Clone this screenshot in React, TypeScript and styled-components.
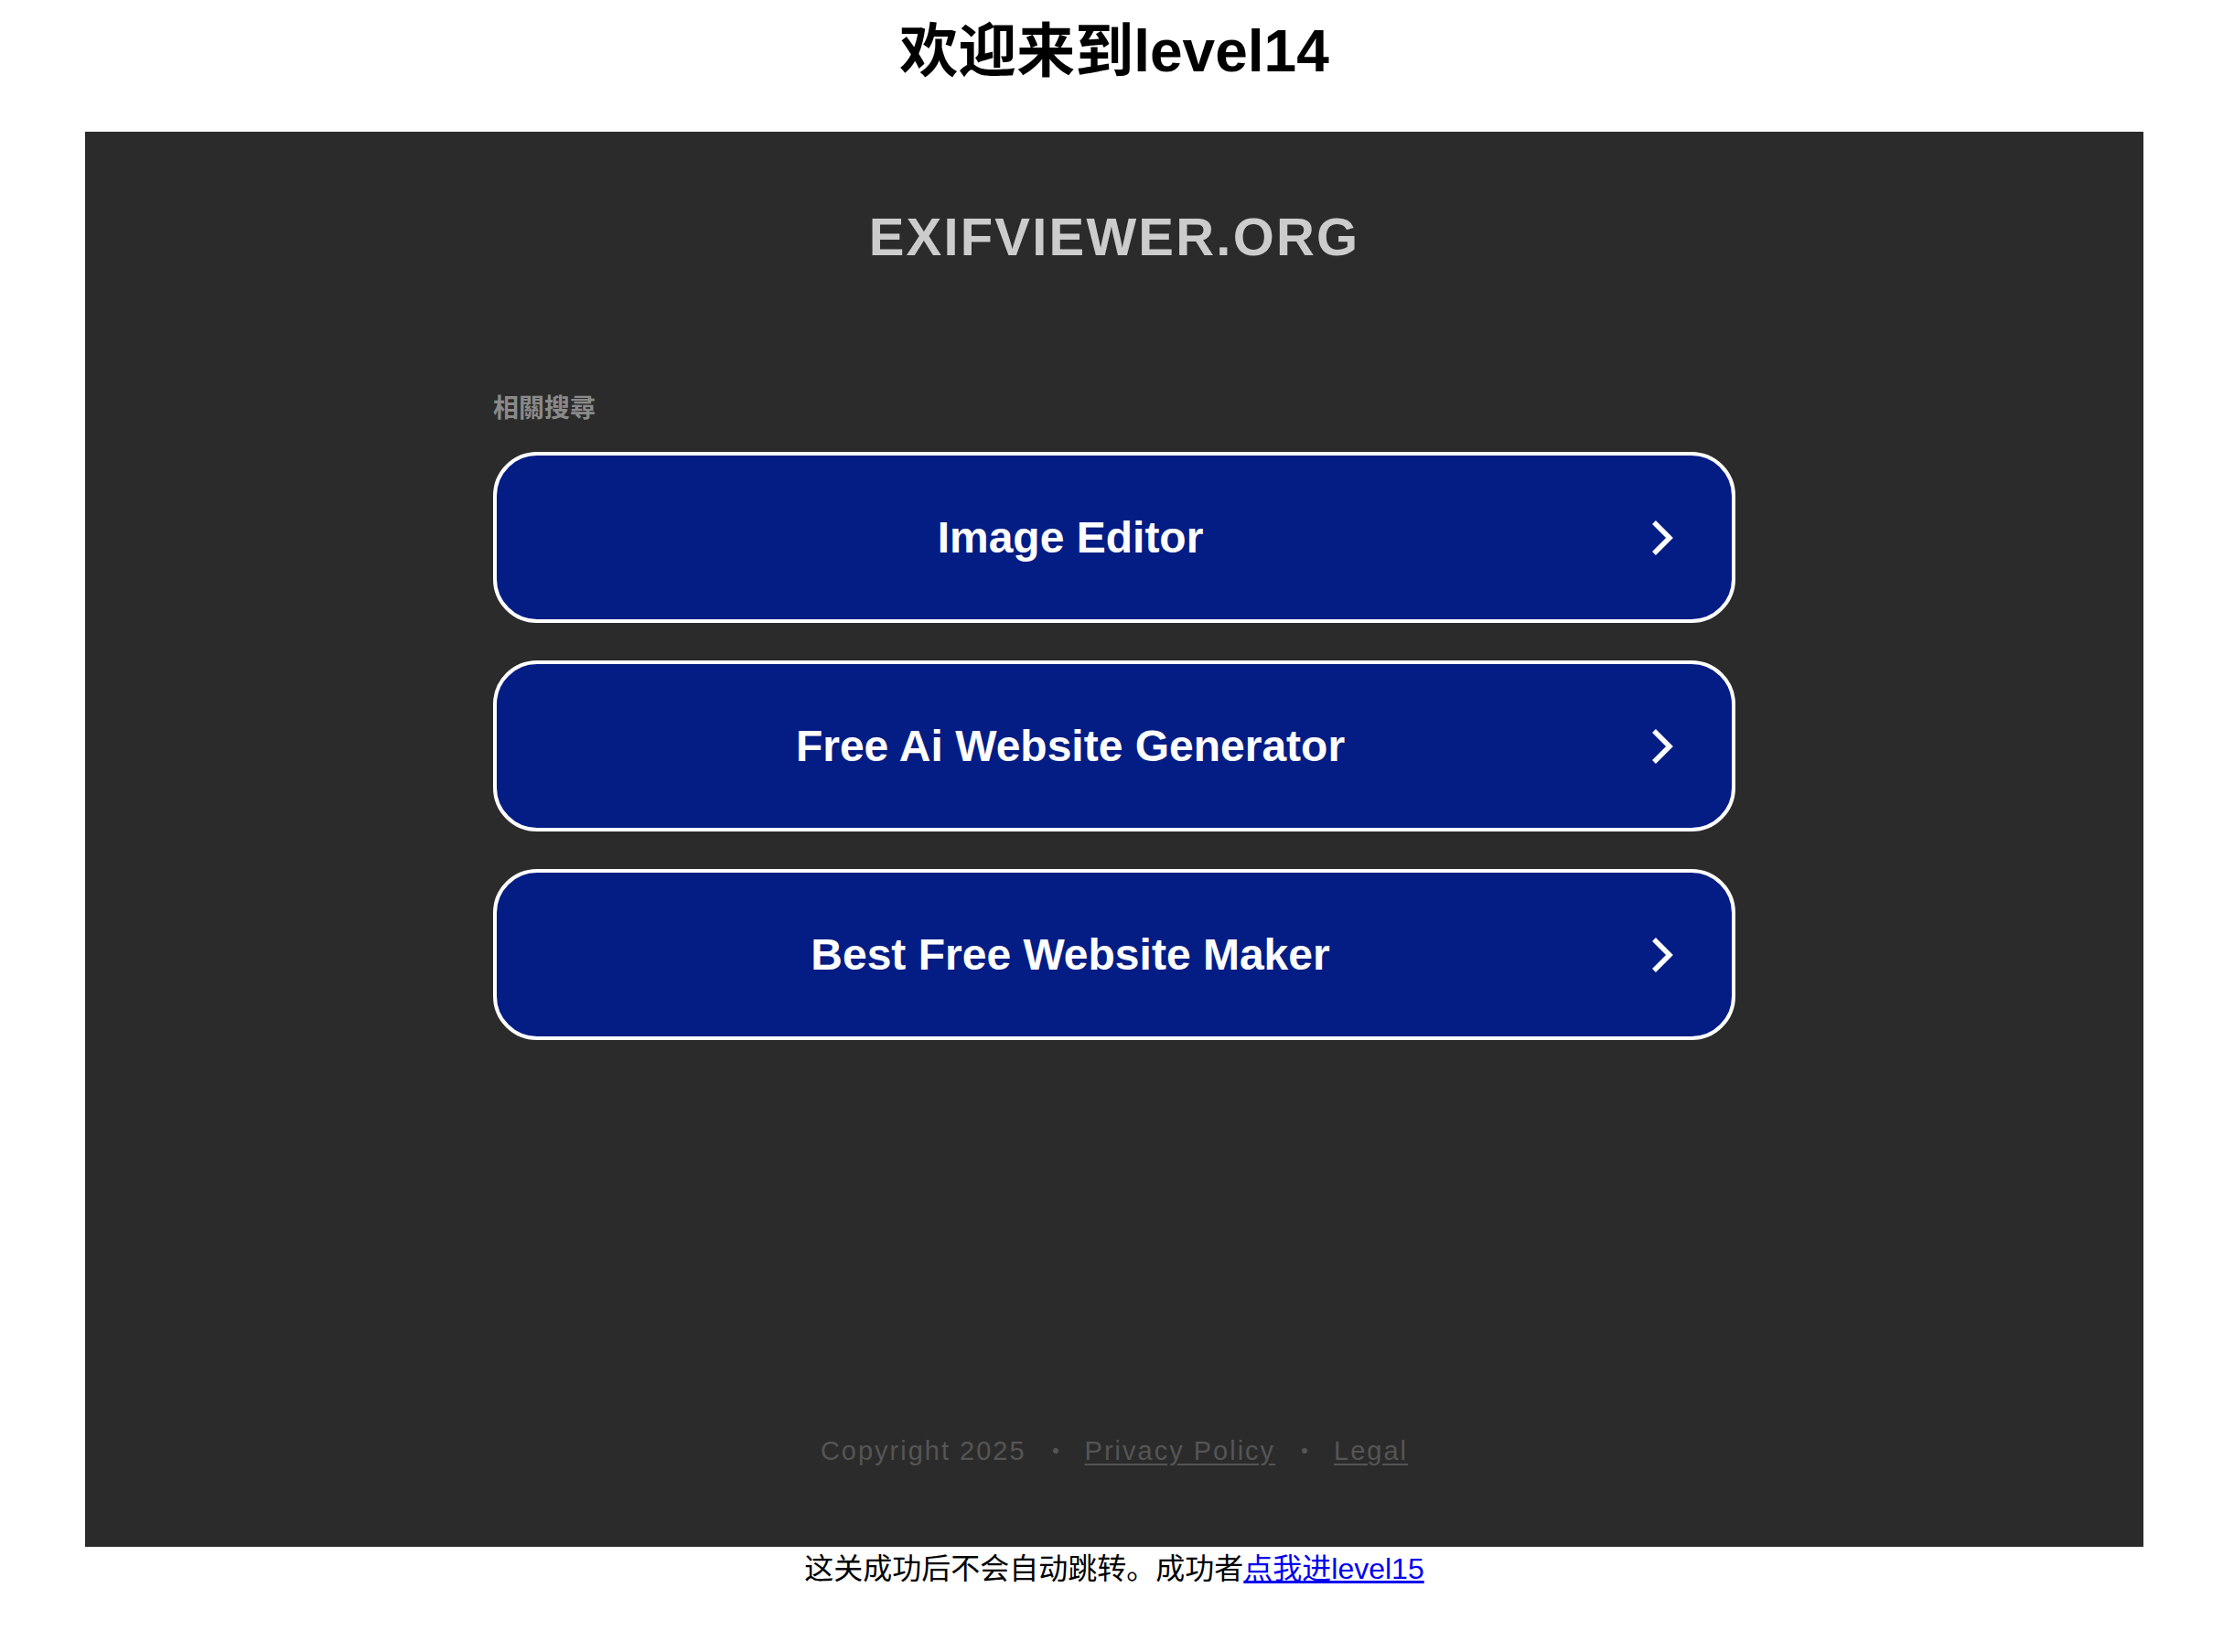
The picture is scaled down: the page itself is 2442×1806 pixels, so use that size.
import styled, { createGlobalStyle } from 'styled-components';

const GlobalStyle = createGlobalStyle`
  html, body {
    margin: 0;
    padding: 0;
    background: #ffffff;
  }
  body {
    font-family: 'Liberation Sans', 'Noto Sans CJK SC', Arial, sans-serif;
    color: #000000;
  }
`;

const links = ['Image Editor', 'Free Ai Website Generator', 'Best Free Website Maker'];

const Page = styled.div`
  box-sizing: border-box;
  width: 100%;
  padding: 0 99px 0 93px;
  display: flex;
  flex-direction: column;
  align-items: center;
`;

const Header = styled.h1`
  box-sizing: border-box;
  height: 144px;
  margin: 0;
  padding-top: 16px;
  font-size: 64px;
  line-height: 80px;
  font-weight: 700;
  text-align: center;
`;

const Panel = styled.main`
  box-sizing: border-box;
  width: 100%;
  height: 1547px;
  padding: 80px 0 85px;
  background: #2b2b2b;
  display: flex;
  flex-direction: column;
  align-items: center;
`;

const Domain = styled.div`
  font-size: 58px;
  line-height: 70px;
  font-weight: 700;
  letter-spacing: 2.2px;
  color: #cccccc;
`;

const Related = styled.section`
  width: 1358px;
  margin-top: 130px;
  display: flex;
  flex-direction: column;
`;

const RelatedLabel = styled.div`
  font-family: 'Noto Sans CJK TC', 'Noto Sans CJK SC', sans-serif;
  font-size: 28px;
  line-height: 40px;
  font-weight: 700;
  color: #8a8a8a;
  margin-bottom: 30px;
`;

const LinkList = styled.div`
  display: flex;
  flex-direction: column;
  gap: 41px;
`;

const LinkButton = styled.a`
  box-sizing: border-box;
  height: 187px;
  padding: 0 64px 0 32px;
  border: 4px solid #ffffff;
  border-radius: 48px;
  background: #041d84;
  color: #ffffff;
  text-decoration: none;
  display: flex;
  align-items: center;
  cursor: pointer;
`;

const LinkText = styled.span`
  flex: 1;
  text-align: center;
  font-size: 48px;
  line-height: 56px;
  font-weight: 700;
`;

const Arrow = styled.span`
  width: 64px;
  display: flex;
  justify-content: flex-end;
  align-items: center;
`;

const Footer = styled.footer`
  margin-top: auto;
  display: flex;
  align-items: center;
  gap: 29px;
  font-size: 29px;
  line-height: 40px;
  letter-spacing: 2px;
  color: #555555;
`;

const FooterLink = styled.a`
  color: #555555;
  text-decoration: underline;
  text-underline-offset: 4px;
`;

const Dot = styled.span`
  width: 6px;
  height: 6px;
  border-radius: 50%;
  background: #555555;
`;

const Note = styled.p`
  margin: 0;
  font-size: 32px;
  line-height: 48px;
  text-align: center;
`;

const NoteLink = styled.a`
  color: #0000ee;
  text-decoration: underline;
`;

function Chevron() {
  return (
    <svg width="24" height="40" viewBox="0 0 24 40" aria-hidden="true">
      <polyline
        points="3,3 20,20 3,37"
        fill="none"
        stroke="#ffffff"
        strokeWidth="5.5"
        strokeLinejoin="miter"
      />
    </svg>
  );
}

export default function App() {
  return (
    <>
      <GlobalStyle />
      <Page>
        <Header>欢迎来到level14</Header>
        <Panel>
          <Domain>EXIFVIEWER.ORG</Domain>
          <Related>
            <RelatedLabel>相關搜尋</RelatedLabel>
            <LinkList>
              {links.map((label) => (
                <LinkButton key={label}>
                  <LinkText>{label}</LinkText>
                  <Arrow>
                    <Chevron />
                  </Arrow>
                </LinkButton>
              ))}
            </LinkList>
          </Related>
          <Footer>
            <span>Copyright 2025</span>
            <Dot />
            <FooterLink href="#">Privacy Policy</FooterLink>
            <Dot />
            <FooterLink href="#">Legal</FooterLink>
          </Footer>
        </Panel>
        <Note>
          这关成功后不会自动跳转。成功者<NoteLink href="#">点我进level15</NoteLink>
        </Note>
      </Page>
    </>
  );
}
